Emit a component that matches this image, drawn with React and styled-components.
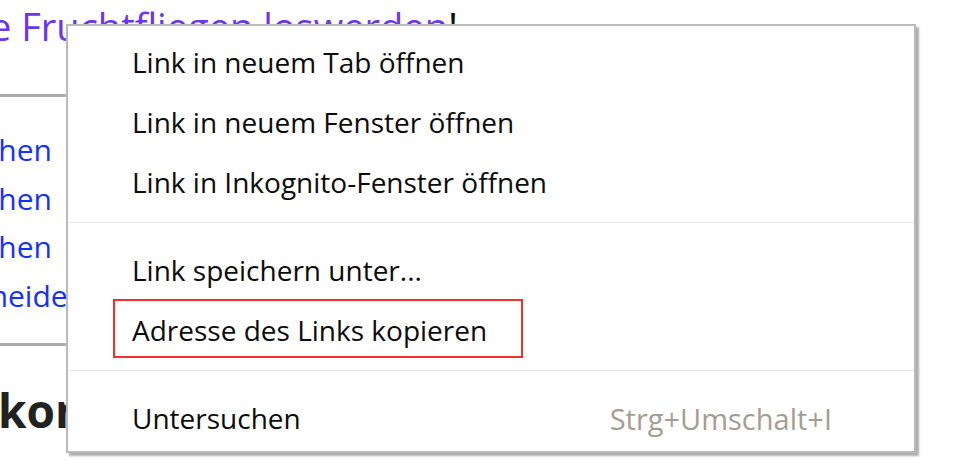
import React from 'react';
import styled, { createGlobalStyle } from 'styled-components';

const GlobalStyle = createGlobalStyle`
  html, body {
    margin: 0;
    padding: 0;
    background: #ffffff;
    overflow: hidden;
  }
  body {
    width: 958px;
    height: 476px;
    font-family: "Open Sans", "Noto Sans", sans-serif;
  }
`;

const Page = styled.div`
  position: relative;
  width: 958px;
  height: 476px;
  overflow: hidden;
`;

const Article = styled.div`
  display: flex;
  flex-direction: column;
  width: 720px;
`;

const TitleLine = styled.div`
  margin-left: -10px;
  font-size: 38px;
  line-height: 52px;
  white-space: nowrap;
  color: #111;
`;

const VisitedLink = styled.a`
  color: #6a36f2;
  text-decoration: none;
`;

const Rule = styled.hr`
  margin: ${p => p.$top}px 0 0 0;
  border: none;
  height: 3px;
  width: 100%;
  background: #ababab;
`;

const LinkList = styled.div`
  display: flex;
  flex-direction: column;
  width: 88px;
  margin-top: ${p => p.$top}px;
  overflow: hidden;
`;

const ListLink = styled.a`
  display: flex;
  justify-content: flex-end;
  white-space: nowrap;
  padding-right: ${p => p.$pad}px;
  font-size: 30px;
  line-height: 48.5px;
  color: #1431ff;
  text-decoration: none;
`;

const Heading = styled.h2`
  margin: ${p => p.$top}px 0 0 -2px;
  font-size: 46px;
  line-height: 56px;
  font-weight: 700;
  color: #222;
  white-space: nowrap;
`;

const Menu = styled.div`
  position: absolute;
  left: 66px;
  top: 24px;
  width: 846px;
  display: flex;
  flex-direction: column;
  padding: 6px 0 3px;
  background: #ffffff;
  border: 2px solid #bababa;
  box-shadow: 3px 3px 2px rgba(0, 0, 0, 0.32);
  font-family: "Open Sans", "Noto Sans", sans-serif;
`;

const Item = styled.div`
  position: relative;
  display: flex;
  align-items: center;
  justify-content: space-between;
  height: 60px;
  padding: 0 82px 0 64px;
  font-size: 28px;
  color: #0c0c0c;
  white-space: nowrap;

  ${p => p.$marked && `
    &::after {
      content: "";
      position: absolute;
      left: 45px;
      top: -1px;
      width: 406px;
      height: 55px;
      border: 2px solid #f0322a;
    }
  `}
`;

const Shortcut = styled.span`
  color: #a49e92;
  font-size: 29px;
`;

const Separator = styled.div`
  height: 1px;
  margin: 10px 0 17px 1px;
  background: #e6e6e6;
`;

export default function App() {
  return (
    <Page>
      <GlobalStyle />
      <Article>
        <TitleLine>
          <VisitedLink href="#">e Fruchtfliegen loswerden</VisitedLink>!
        </TitleLine>
        <Rule $top={42} />
        <LinkList $top={29}>
          <ListLink href="#" $pad={36}>Ursachen</ListLink>
          <ListLink href="#" $pad={36}>Fallen versuchen</ListLink>
          <ListLink href="#" $pad={36}>Obst abwaschen</ListLink>
          <ListLink href="#" $pad={2}>Befall vermeiden</ListLink>
        </LinkList>
        <Rule $top={23} />
        <Heading $top={36}>kontrollieren</Heading>
      </Article>

      <Menu>
        <Item>Link in neuem Tab öffnen</Item>
        <Item>Link in neuem Fenster öffnen</Item>
        <Item>Link in Inkognito-Fenster öffnen</Item>
        <Separator />
        <Item>Link speichern unter...</Item>
        <Item $marked>Adresse des Links kopieren</Item>
        <Separator />
        <Item>
          Untersuchen
          <Shortcut>Strg+Umschalt+I</Shortcut>
        </Item>
      </Menu>
    </Page>
  );
}
